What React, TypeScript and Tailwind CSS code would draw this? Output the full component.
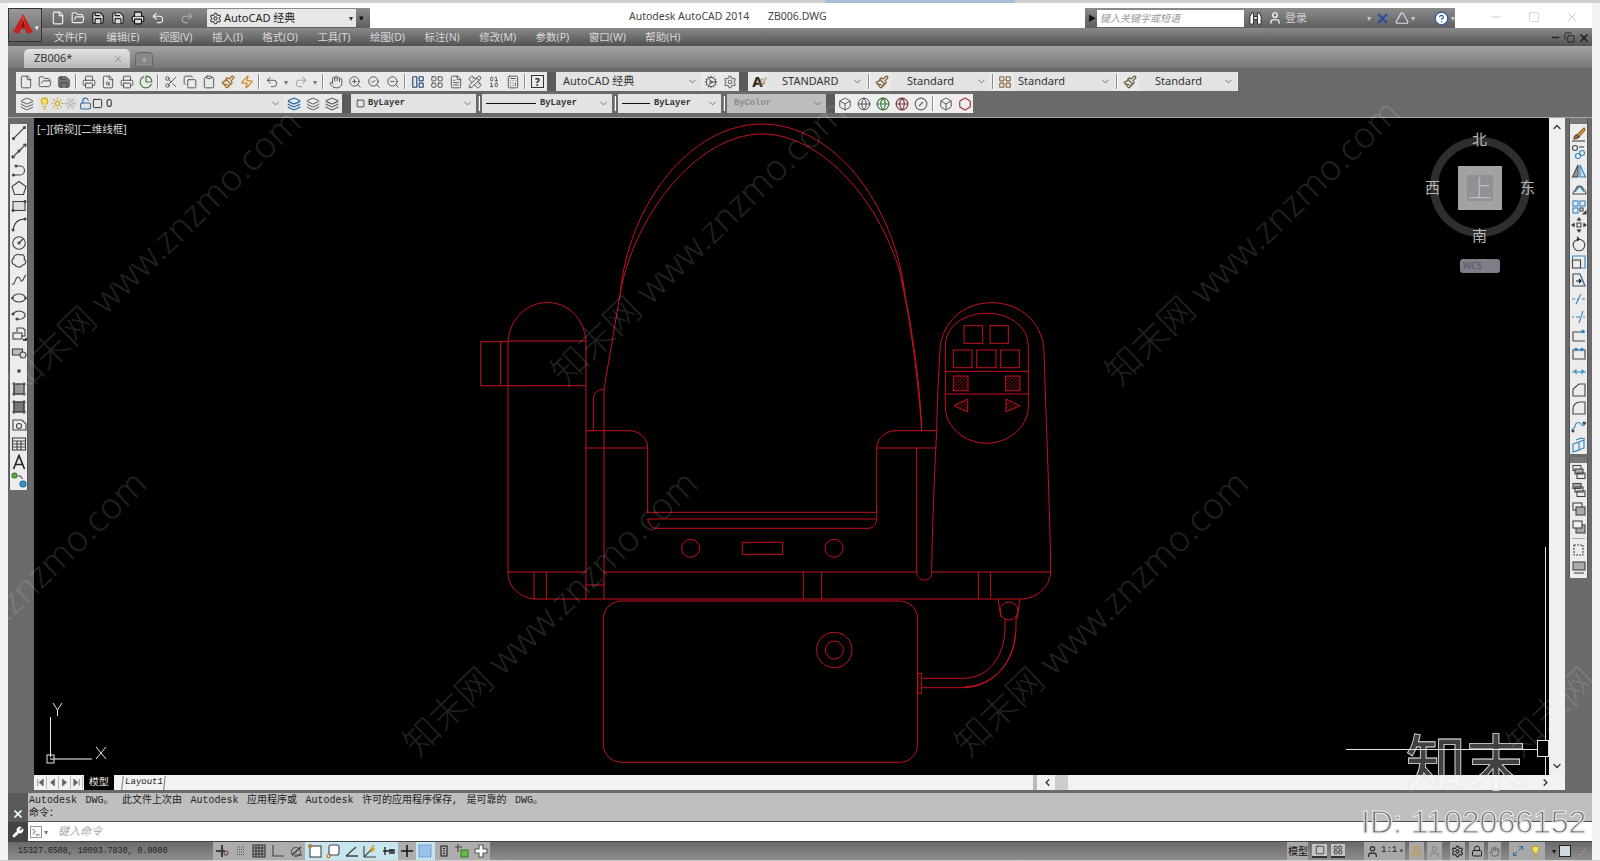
import React from "react";
import {
  File, FolderOpen, Save, Printer, FileSearch, PieChart, Scissors, Copy, Clipboard, Paintbrush, Zap, Undo2, Redo2,
  Hand, ZoomIn, ZoomOut, SearchCheck, LayoutPanelLeft, LayoutGrid, FileText, PencilRuler, Calculator, Settings,
  Layers, Lightbulb, Sun, Snowflake, LockOpen, Box, Globe, CircleSlash, ChevronDown, ChevronUp, ChevronLeft, ChevronRight,
  User, CircleHelp, Minus, X, Terminal, Wrench, Square, Binary, Triangle, Maximize2, Cog, Lock, Hexagon,
} from "lucide-react";

const RED = "#c3121f";

const T = ({ children, cls = "" }: { children: React.ReactNode; cls?: string }) => (
  <span className={`flex h-full w-[19px] shrink-0 items-center justify-center ${cls}`}>{children}</span>
);

const ic = "h-[14px] w-[14px] stroke-[1.4] text-[#3c3c3c]";

const Sep = () => <span className="mx-[2px] h-[15px] w-[2px] shrink-0 self-center border-l border-[#8a8a8a] bg-white" />;
const Handle = ({ w }: { w: string }) => <span className={`h-full shrink-0 bg-[#5a5a5a] ${w}`} />;
const Dot = ({ cls = "w-[10px]" }: { cls?: string }) => <span className={`flex shrink-0 items-center justify-center text-[8px] text-[#777] ${cls}`}>▾</span>;

const Combo = ({ w, children, mono = false, dim = false }: { w: string; children: React.ReactNode; mono?: boolean; dim?: boolean }) => (
  <span className={`flex h-full shrink-0 items-center justify-between pr-[3px] ${w} ${dim ? "bg-[#bdbdbd] text-[#8c8c8c]" : "bg-[#e3e3e3] text-[#333]"} ${mono ? "font-['Liberation_Mono',monospace] text-[8.8px] font-bold" : "text-[11px]"}`}>
    {children}
    <ChevronDown className="h-[11px] w-[11px] shrink-0 text-[#666]" />
  </span>
);

const Mini = ({ children, stroke = "#444" }: { children: React.ReactNode; stroke?: string }) => (
  <svg viewBox="0 0 16 16" fill="none" stroke={stroke} strokeWidth="1.1" className="h-[16px] w-[16px]">{children}</svg>
);

const B = "#2f86c1";
const draw: React.ReactNode[] = [
  <><path d="M2 14L14 2" /><circle cx="2.5" cy="13.5" r="1" fill="#444" /><circle cx="13.5" cy="2.5" r="1" fill="#444" /></>,
  <><path d="M1 15L15 1" /><path d="M1 15l3 -.5M1 15l.5-3M15 1l-3 .5M15 1l-.5 3" /><circle cx="8" cy="8" r="1" fill="#444" /></>,
  <><path d="M2 13h7a4.500 4.500 0 0 0 0-9H5" /><circle cx="2.500" cy="13" r="1" fill="#444" /><circle cx="5" cy="4" r="1" fill="#444" /></>,
  <path d="M8 1.500L15 6.500 12.500 14.500H3.500L1 6.500Z" />,
  <><rect x="2" y="3.500" width="12" height="9" fill="#ddd" /><circle cx="14" cy="3.500" r="1" fill="#444" /><circle cx="2" cy="12.500" r="1" fill="#444" /></>,
  <><path d="M2 14C3 7 7 3 14 3" /><circle cx="2" cy="14" r="1" fill="#444" /><circle cx="14" cy="3" r="1" fill="#444" /></>,
  <><circle cx="8" cy="8" r="6.300" /><path d="M8 8l4-4" /><circle cx="8" cy="8" r="1" fill="#444" /></>,
  <path d="M5 2c2-1.500 4 0 4 0s3-1 4 1-0 3-0 3 2.500 2 1.500 4-3 2-3 2-1 2.500-4 2-3.500-2-3.500-2-3.500-1-3-4 2-3 2-3-1-3 2.500-3z" />,
  <path d="M1 13c3 2 3-7 6-7s2 5 4 4 2-5 4-6" />,
  <><ellipse cx="8" cy="8" rx="6.500" ry="4" /><circle cx="1.500" cy="8" r=".8" fill="#444" /><circle cx="14.500" cy="8" r=".8" fill="#444" /></>,
  <><path d="M2 6c3-4 9-4 12 0 1 4-4 6-8 5" /><circle cx="2" cy="6" r="1" fill="#444" /><circle cx="6" cy="11" r="1" fill="#444" /></>,
  <><path d="M6 6V2h6l2 2v6h-4" /><rect x="2" y="7" width="9" height="6" /><path d="M12 14l3 0 0-2" stroke="#111" strokeWidth="1.500" /></>,
  <><rect x="1.500" y="5" width="10" height="6" fill="#bbb" /><circle cx="12" cy="11" r="3" fill="#ddd" /></>,
  <circle cx="8" cy="8" r="1.300" fill="#555" />,
  <><rect x="3" y="3" width="10" height="10" fill="#999" /><path d="M1 3h14M1 13h14M3 1v14M13 1v14" /></>,
  <><rect x="3" y="3" width="10" height="10" fill="#777" /><path d="M1 3h14M1 13h14M3 1v14M13 1v14" /></>,
  <><path d="M2 3h9l4 4v6H2z" /><circle cx="8" cy="9" r="2.500" /></>,
  <><rect x="1.500" y="2" width="13" height="12" /><path d="M1.500 5h13M1.500 8h13M1.500 11h13M6 5v9M10 5v9" /></>,
  <path d="M2.500 15L8 1.500 13.500 15M4.500 10.500h7" strokeWidth="1.600" stroke="#222" />,
  <><circle cx="3.500" cy="3.500" r="2.500" fill="#66a845" stroke="#3c7a2a" /><path d="M6.500 4h3l2 3" /><circle cx="12" cy="12" r="3" fill="#3f93cc" stroke="#1f6aa0" /></>,
];

const modify: React.ReactNode[] = [
  <><path d="M13 2L6 9l2 2 6-7z" fill="#e0a050" stroke="#8a5a20" /><path d="M6 9c-2 0-3 2-3 4 2 0 4-1 5-2z" fill="#c07030" /><path d="M1 15h13" /></>,
  <><circle cx="4" cy="4" r="2.500" /><circle cx="11" cy="9" r="2.500" stroke={B} /><circle cx="7" cy="12" r="2.500" stroke={B} /><path d="M8 3h5" /></>,
  <><path d="M7 2v12H1.500z" fill="#999" /><path d="M9 2v12h5.500z" fill="#cde" stroke={B} /></>,
  <><path d="M2 13c0-3 2-3 3-5 1-4 6-4 7 0 1 1 3 1 3 5z" /><path d="M4.500 11c0-2 2-2 2.500-3.500 1-2 3-2 3.500 0 .5 1 2 1.500 2 3.500" stroke={B} /></>,
  <><rect x="2" y="2" width="5" height="5" stroke={B} /><rect x="9" y="2" width="5" height="5" stroke={B} /><rect x="2" y="9" width="5" height="5" stroke={B} /><rect x="9" y="9" width="3" height="3" /><path d="M12 15l3 0 0-3z" fill="#111" /></>,
  <><rect x="6" y="6" width="4" height="4" /><path d="M8 1v3M8 12v3M1 8h3M12 8h3M8 1l-1.500 2h3zM8 15l-1.500-2h3zM1 8l2-1.500v3zM15 8l-2-1.500v3z" fill="#333" /></>,
  <><circle cx="8" cy="9" r="5.800" /><path d="M8 3l-2-2M8 3L6 5" stroke="#111" /></>,
  <><rect x="1.500" y="6" width="8" height="8" /><path d="M1.500 6V2h12.500v12h-4" stroke={B} /></>,
  <><path d="M2 2h7l5 12H2z" /><path d="M9 2l5 12" stroke={B} /><path d="M5 9h5M8 7l2 2-2 2" stroke="#111" /></>,
  <path d="M1 8h3M6 8h2M11 8h3M5 13L10 3" stroke={B} />,
  <path d="M1 8h2M5 8h4M12 2L8 14M12 8h2" stroke={B} />,
  <><path d="M2 14h12M2 14V5h9" /><circle cx="12" cy="4.500" r="1.300" fill={B} stroke={B} /></>,
  <><path d="M3 5H2v9h12V5h-1M6 5h4" /><circle cx="5" cy="4.500" r="1.300" fill={B} stroke={B} /><circle cx="11" cy="4.500" r="1.300" fill={B} stroke={B} /></>,
  <path d="M1 8h14M5 5.500v5M11 5.500v5M5 8l-2-1.500M11 8l2-1.500" stroke={B} />,
  <path d="M2 14V7l6-5h6v12z" />,
  <path d="M2 14V9c0-4 3-7 7-7h5v12z" />,
  <><path d="M1 13c0-3 3-2 3-5s4-5 6-2 4 1 5-2" stroke={B} /><circle cx="2" cy="13" r="1" fill="#333" /><circle cx="13" cy="5" r="1" fill="#333" /></>,
  <><path d="M2 7l6-2 0 8-6 2zM8 5l5-2v8l-5 2z" stroke={B} /><path d="M5 3l5-2 4 1" stroke={B} /></>,
];
const order: React.ReactNode[] = [
  <><rect x="2" y="1.500" width="8" height="5" /><rect x="4" y="5" width="8" height="5" fill="#aaa" /><rect x="6" y="9" width="8" height="5.500" /></>,
  <><rect x="2" y="1.500" width="8" height="5" fill="#aaa" /><rect x="4" y="5" width="8" height="5" /><rect x="6" y="9" width="8" height="5.500" /></>,
  <><rect x="2" y="2" width="9" height="7" /><rect x="5" y="6" width="9" height="8" fill="#aaa" /></>,
  <><rect x="5" y="6" width="9" height="8" fill="#aaa" /><rect x="2" y="2" width="9" height="7" fill="#eee" /></>,
];

const statusIcons: { a?: boolean; n: React.ReactNode }[] = [
  { n: <><path d="M8 2v12M2 8h9" stroke="#222" strokeWidth="1.600" /><circle cx="12" cy="10" r="2" fill="#d89a8a" stroke="#555" /><rect x="7" y="7" width="2" height="2" fill="#333" /></> },
  { n: <path d="M4 4h8M4 6.500h8M4 9h8M4 11.500h8" strokeDasharray="1 1" stroke="#555" /> },
  { n: <path d="M2 2h12v12H2zM2 5h12M2 8h12M2 11h12M5 2v12M8 2v12M11 2v12" stroke="#333" /> },
  { n: <path d="M3 2v11h11" stroke="#444" /> },
  { n: <><circle cx="8" cy="9" r="4.500" stroke="#555" /><path d="M4 12L13 4M7 12h7" stroke="#333" /></> },
  { a: true, n: <><rect x="3" y="3" width="11" height="11" stroke="#444" fill="#fff" /><circle cx="3" cy="3" r="1.500" stroke="#d07020" /></> },
  { a: true, n: <><rect x="4" y="2" width="10" height="10" fill="#fff" rx="2" /><circle cx="3.500" cy="13" r="1.700" stroke="#d07020" /></> },
  { a: true, n: <path d="M2 13h12M2 13L12 4" stroke="#444" strokeWidth="1.300" /> },
  { a: true, n: <><path d="M2 14V3M2 14h12M2 14L11 5" stroke="#444" /><path d="M12 2l-3 4 3 0-2 3" stroke="#e0a020" strokeWidth="1.500" /></> },
  { a: true, n: <path d="M3 8h10M5 4v8M9 7h5v3H9" stroke="#222" strokeWidth="1.300" /> },
  { n: <path d="M8 2v12M2 8h12" stroke="#111" strokeWidth="1.500" /> },
  { a: true, n: <rect x="2" y="2" width="12" height="12" fill="#9cc4ea" stroke="#4f86c0" strokeDasharray="1 0.600" /> },
  { n: <><rect x="5" y="3" width="6" height="10" stroke="#222" /><path d="M7 5.500h2M7 8h2M7 10.500h2" stroke="#222" /></> },
  { n: <><path d="M4 1v8M1 4h7" stroke="#444" /><rect x="7" y="7" width="7" height="7" fill="#66b84a" stroke="#3c7a2a" /></> },
  { n: <path d="M6 2h4v4h4v4h-4v4H6v-4H2V6h4z" fill="#fff" stroke="#555" /> },
];

const navs: React.ReactNode[] = [
  <path d="M4 3v10M12 3L6 8l6 5z" fill="#666" stroke="#666" />,
  <path d="M11 3L5 8l6 5z" fill="#666" stroke="#666" />,
  <path d="M5 3l6 5-6 5z" fill="#666" stroke="#666" />,
  <path d="M12 3v10M4 3l6 5-6 5z" fill="#666" stroke="#666" />,
];

const Tool = ({ children }: { children: React.ReactNode }) => (
  <span className="flex h-[18.28px] items-center justify-center"><Mini>{children}</Mini></span>
);

const marks: { pos: string; text: string }[] = [
  { pos: "left-[12px] top-[370px]", text: "知末网 www.znzmo.com" },
  { pos: "left-[557px] top-[360px]", text: "知末网 www.znzmo.com" },
  { pos: "left-[1111px] top-[360px]", text: "知末网 www.znzmo.com" },
  { pos: "left-[409px] top-[731px]", text: "知末网 www.znzmo.com" },
  { pos: "left-[960px] top-[731px]", text: "知末网 www.znzmo.com" },
  { pos: "left-[1512px] top-[731px]", text: "知末网 www.znzmo.com" },
  { pos: "left-[-142px] top-[731px]", text: "知末网 www.znzmo.com" },
];

const Drawing = () => (
  <svg viewBox="34 118 1515 657" className="block h-full w-full" fill="none" stroke={RED} strokeWidth="1">
    <defs>
      <pattern id="h" width="2.500" height="2.500" patternUnits="userSpaceOnUse" patternTransform="rotate(45)">
        <path d="M0 0V2.500" stroke={RED} strokeWidth="1" />
      </pattern>
    </defs>
    <path d="M620 295C628 205 690 124 762 124C834 124 895 205 905 295" />
    <path d="M620 295C632 220 695 134 762 134C830 134 893 220 905 295" />
    <path d="M620 295L604 389V599" />
    <path d="M905 295C911 325 920 380 921.700 431" />
    <path d="M901.500 280C910 320 918 375 921.700 431" />
    <path d="M508 341C510 318 528 302.500 547 302.500C568 302.500 584 318 586 341V599" />
    <path d="M508 341H586M480.700 341.700V385.700H586M480.700 341.700H508M500.700 341.700V385.700M508 341V572C508 588 520 597 534 599H1023C1040 597 1050 585 1050.700 572" />
    <path d="M508 572H586M534 572V599M546.300 572V599M586 585H604M604 572H917M932 572H1050.700" />
    <path d="M586 430.700H630C640 431 648 439 647.700 448V513M586 448H647.700M593.300 431V400C593.300 393 598 389 604 389" />
    <path d="M647.700 512.300H876.700M647.700 519H876.700M647.700 519C649 525 652 528.300 657 528.300H868C873 528.300 876 525 876.700 519" />
    <path d="M876.700 519V448C877 439 885 431 895 430.700H936.700M876.700 448H936.700" />
    <path d="M916.700 448V573C917 578 921 580 924.500 580C928 580 931.500 578 931.700 573C932 540 934 480 936.700 431C937 400 939 370 940 350C942 320 965 302.700 991.700 302.700C1020 302.700 1042 322 1044 350C1046 420 1050 510 1050.700 572" />
    <circle cx="690.700" cy="548.300" r="9" />
    <circle cx="834" cy="548.300" r="9" />
    <rect x="742.300" y="542.300" width="40.400" height="12" />
    <path d="M803.300 572V599M821.700 572V599M978.300 572V599M990.700 572V599" />
    <path d="M945.300 347C945.300 325 965 313.300 986.800 313.300C1008 313.300 1028.300 325 1028.300 347V407C1028.300 427 1008 443.300 986.800 443.300C965 443.300 945.300 427 945.300 407Z" />
    <rect x="964" y="325.700" width="18.700" height="17.600" />
    <rect x="990" y="325.700" width="18.300" height="17.600" />
    <rect x="953.300" y="350" width="18.700" height="17.700" />
    <rect x="976.700" y="350" width="19.300" height="17.700" />
    <rect x="1000.700" y="350" width="18.600" height="17.700" />
    <path d="M945.300 371.300H1028.300M945.300 394H1028.300" />
    <rect x="953.300" y="376" width="14.700" height="14.700" fill="url(#h)" />
    <rect x="1005.700" y="376" width="14.300" height="14.700" fill="url(#h)" />
    <path d="M954 405.700L967.700 399V412Z" fill="url(#h)" />
    <path d="M1020 405.700L1006 399V412Z" fill="url(#h)" />
    <rect x="603.300" y="601" width="314.400" height="161.300" rx="18" />
    <circle cx="834.300" cy="650" r="17.700" />
    <circle cx="834.300" cy="650" r="9" />
    <rect x="917.700" y="673.300" width="3.600" height="20" />
    <path d="M921 678.300H963C990 678.300 1005 655 1005 626.700V619" />
    <path d="M921 687.700H963C995 687.700 1016 660 1016 626V617" />
    <path d="M964 687C995 686 1014 660 1015 636" />
    <circle cx="1009" cy="611" r="9" />
    <path d="M998 599L1001 617M1020 599L1017 619" />
    <g stroke="#e8e8e8" strokeWidth="1">
      <path d="M50.500 717V757" />
      <path d="M50 759H92" strokeWidth="1.500" stroke="#aaa" />
      <rect x="47" y="755" width="7" height="8" fill="none" />
      <path d="M53 703L57.500 710M62 703L57.500 710V716" />
      <path d="M96 747L106 759M106 747L96 759" />
    </g>
    <g stroke="#e2e2e2">
      <path d="M1346 749.500H1537M1545.500 547V740M1545.500 757V775" />
      <rect x="1537.500" y="740.500" width="11" height="16" />
    </g>
    <circle cx="1480" cy="187" r="46" stroke="#2e2e2e" strokeWidth="8" />
  </svg>
);

export default function App() {
  return (
    <div className="relative flex h-[861px] w-[1600px] flex-col overflow-hidden bg-[#f3f3f3] font-['Noto_Sans','Noto_Sans_CJK_SC',sans-serif] text-[11px]">
      <div className="flex h-[3px] shrink-0 bg-[#cfcfcf]">
        <div className="ml-[825px] w-[190px] bg-[#a9bcd6]" />
      </div>

      <div className="mx-[8px] flex min-h-0 flex-1 flex-col">
        {/* title */}
        <div className="flex h-[25px] shrink-0 items-start bg-white pl-[34px] pt-[5px]">
          <div className="flex h-[20px] w-[328px] shrink-0 items-center bg-gradient-to-b from-[#8b8b8b] to-[#5f5f5f] pl-[6px] text-white">
            <T cls="!w-[20px]"><File className="h-[14px] w-[14px] text-[#eee]" /></T>
            <T cls="!w-[20px]"><FolderOpen className="h-[14px] w-[14px] text-[#eee]" /></T>
            <T cls="!w-[20px]"><Save className="h-[14px] w-[14px] text-[#111]" fill="#ddd" /></T>
            <T cls="!w-[20px]"><Save className="h-[14px] w-[14px] text-[#222]" fill="#ddd" /></T>
            <T cls="!w-[20px]"><Printer className="h-[14px] w-[14px] text-[#111]" fill="#ddd" /></T>
            <T cls="!w-[20px]"><Undo2 className="h-[14px] w-[14px] text-[#eee]" /></T>
            <Dot cls="w-[9px]" />
            <T cls="!w-[20px]"><Redo2 className="h-[14px] w-[14px] text-[#aaa]" /></T>
            <Dot cls="w-[9px]" />
            <div className="ml-px flex h-[18px] w-[149px] shrink-0 items-center justify-between bg-[#e7e7e7] pl-[2px] pr-[3px] text-[11px] text-[#222]">
              <span className="flex items-center gap-[2px] whitespace-nowrap"><Settings className="h-[13px] w-[13px] text-[#444]" />AutoCAD 经典</span>
              <span className="text-[8px] text-[#333]">▾</span>
            </div>
            <span className="ml-[3px] text-[9px] text-[#111]">▾</span>
          </div>
          <div className="ml-[259px] flex w-[200px] shrink-0 gap-[20px] whitespace-nowrap pt-[1px] text-[10.500px] text-[#444]">
            <span className="w-[119px] shrink-0">Autodesk AutoCAD 2014</span>
            <span>ZB006.DWG</span>
          </div>
          <div className="ml-[256px] flex h-[20px] w-[370px] shrink-0 items-center bg-gradient-to-b from-[#8b8b8b] to-[#5f5f5f]">
            <span className="ml-[3px] w-[9px] text-[8px] text-[#111]">▶</span>
            <div className="flex h-[17px] w-[149px] items-center bg-white pl-[3px] text-[10px] italic text-[#999]">键入关键字或短语</div>
            <T cls="ml-[2px]">
              <svg viewBox="0 0 16 16" className="h-[15px] w-[15px]" fill="#fff" stroke="#222" strokeWidth="1">
                <path d="M2 14V6l2-4h2v12zM10 14V2h2l2 4v8z" />
                <path d="M6 6h4v3H6z" />
              </svg>
            </T>
            <T><User className="h-[14px] w-[14px] text-white" /></T>
            <span className="ml-px whitespace-nowrap text-[11px] text-[#ccc]">登录</span>
            <span className="ml-[60px] text-[8px] text-[#ccc]">▾</span>
            <T cls="ml-[2px]"><X className="h-[15px] w-[15px] stroke-[3.500] text-[#2a4a9a]" /></T>
            <T><Triangle className="h-[14px] w-[14px] text-[#dde]" /></T>
            <span className="text-[8px] text-[#ccc]">▾</span>
            <T cls="ml-[17px]"><CircleHelp className="h-[15px] w-[15px] text-[#2a5aa0]" fill="#fff" /></T>
            <span className="text-[8px] text-[#ccc]">▾</span>
          </div>
          <div className="ml-[34px] flex flex-1 items-center gap-[25px] pt-[2px] text-[#aaa]">
            <Minus className="h-[14px] w-[14px] shrink-0 stroke-[1]" />
            <Square className="h-[12px] w-[12px] shrink-0 stroke-[1]" />
            <X className="h-[14px] w-[14px] shrink-0 stroke-[1]" />
          </div>
        </div>

        {/* menu */}
        <div className="flex h-[18px] shrink-0 items-center gap-[19.500px] bg-gradient-to-b from-[#8a8a8a] to-[#525252] pl-[46px] pt-px text-[10.500px] text-[#d8d8d8]">
          {["文件(F)", "编辑(E)", "视图(V)", "插入(I)", "格式(O)", "工具(T)", "绘图(D)", "标注(N)", "修改(M)", "参数(P)", "窗口(W)", "帮助(H)"].map((m) => (
            <span key={m}>{m}</span>
          ))}
          <span className="ml-auto mr-[2px] flex items-center gap-[3px] text-[#222]">
            <Minus className="h-[11px] w-[11px] stroke-[3]" />
            <Copy className="h-[11px] w-[11px] stroke-[2]" />
            <X className="h-[12px] w-[12px] stroke-[3.500]" />
          </span>
        </div>

        {/* tabs */}
        <div className="flex h-[22px] shrink-0 items-end bg-gradient-to-b from-[#a3a3a3] to-[#777] pl-[16px]">
          <div className="flex h-[19px] w-[106px] items-center justify-between rounded-t-[5px] bg-gradient-to-b from-[#e4e4e4] to-[#b8b8b8] pl-[10px] pr-[7px] text-[11px] text-[#333]">
            <span>ZB006*</span>
            <X className="h-[10px] w-[10px] stroke-[2.500] text-[#999]" />
          </div>
          <div className="mb-px ml-[5px] flex h-[15px] w-[18px] items-center justify-center rounded-t-[4px] border border-[#666] bg-[#888] text-[9px] text-[#ccc]">+</div>
        </div>

        {/* toolbars */}
        <div className="flex h-[49px] shrink-0 flex-col bg-[#6a6a6a] pl-[8px] pt-[4px]">
          <div className="flex h-[19px] w-[1222px] shrink-0 items-stretch bg-[#e9e9e9]">
            <T><File className={ic} /></T><T><FolderOpen className={ic} /></T><T><Save className={ic} fill="#777" /></T>
            <Sep />
            <T><Printer className={ic} /></T><T><FileSearch className={ic} /></T><T><Printer className={`${ic} text-[#2a6aa0]`} /></T><T><PieChart className="h-[14px] w-[14px] text-[#4a7a40]" /></T>
            <Sep />
            <T><Scissors className={ic} /></T><T><Copy className={ic} /></T><T><Clipboard className={ic} /></T><T><Paintbrush className="h-[14px] w-[14px] text-[#9a6a20]" /></T><T><Zap className="h-[14px] w-[14px] text-[#c88a20]" /></T>
            <Sep />
            <T><Undo2 className={ic} /></T><Dot /><T><Redo2 className="h-[14px] w-[14px] text-[#aaa]" /></T><Dot />
            <Sep />
            <T><Hand className={ic} /></T><T><ZoomIn className={ic} /></T><T><SearchCheck className={ic} /></T><T><ZoomOut className={ic} /></T>
            <Sep />
            <T><LayoutPanelLeft className="h-[14px] w-[14px] text-[#2a4a7a]" /></T><T><LayoutGrid className={ic} /></T><T><FileText className={ic} /></T><T><PencilRuler className={ic} /></T><T><Binary className={ic} /></T><T><Calculator className={ic} /></T>
            <Sep />
            <T><span className="flex h-[13px] w-[13px] items-center justify-center border border-[#333] text-[10px] font-bold leading-none text-[#222]">?</span></T>
            <Handle w="w-[9px]" />
            <Combo w="w-[145px] pl-[7px]">AutoCAD 经典</Combo>
            <T><Cog className={ic} /></T><T><Settings className="h-[14px] w-[14px] text-[#777]" /></T>
            <Handle w="w-[9px]" />
            <T cls="relative"><span className="text-[15px] font-bold leading-none text-[#222]">A</span><Paintbrush className="absolute right-0 top-[5px] h-[10px] w-[10px] text-[#9a6a20]" /></T>
            <Combo w="w-[99px] pl-[15px]">STANDARD</Combo>
            <Sep />
            <T><Paintbrush className="h-[14px] w-[14px] text-[#7a5a30]" /></T>
            <Combo w="w-[99px] pl-[16px]">Standard</Combo>
            <Sep />
            <T cls="!w-[18px]"><LayoutGrid className="h-[14px] w-[14px] text-[#8a6a40]" /></T>
            <Combo w="w-[100px] pl-[4px]">Standard</Combo>
            <Sep />
            <T><Paintbrush className="h-[14px] w-[14px] text-[#6a5a40]" /></T>
            <Combo w="w-[98px] pl-[16px]">Standard</Combo>
          </div>
          <div className="mt-[3px] flex h-[19px] shrink-0 items-stretch">
            <span className="flex w-[22px] shrink-0 items-center justify-center bg-[#e9e9e9]"><Layers className={ic} /></span>
            <span className="flex h-full w-[246px] shrink-0 items-center justify-between bg-[#e3e3e3] pr-[3px]">
              <span className="flex items-center">
                <T cls="!w-[13px]"><Lightbulb className="h-[13px] w-[13px] text-[#c9a520]" fill="#f2df70" /></T>
                <T cls="!w-[13px]"><Sun className="h-[13px] w-[13px] text-[#c9a520]" /></T>
                <T cls="!w-[13px]"><Snowflake className="h-[13px] w-[13px] text-[#bbb]" /></T>
                <T cls="!w-[16px]"><LockOpen className="h-[13px] w-[13px] text-[#2a6aa0]" /></T>
                <Square className="ml-[-1px] h-[11px] w-[11px] text-[#222]" />
                <span className="ml-[3px] text-[11px] text-[#222]">0</span>
              </span>
              <ChevronDown className="h-[11px] w-[11px] text-[#666]" />
            </span>
            <span className="flex w-[58px] shrink-0 items-center bg-[#e9e9e9]">
              <T><Layers className="h-[14px] w-[14px] text-[#2a6aa0]" /></T><T><Layers className={ic} /></T><T><Layers className="h-[14px] w-[14px] text-[#666]" /></T>
            </span>
            <Handle w="w-[9px]" />
            <Combo w="w-[125px] pl-[5px]" mono><span className="flex items-center gap-[3px]"><Square className="h-[9px] w-[9px] text-[#222]" />ByLayer</span></Combo>
            <Sep />
            <Combo w="w-[130px] pl-[4px]" mono><span className="flex items-center gap-[4px]"><span className="h-px w-[50px] bg-[#111]" />ByLayer</span></Combo>
            <Sep />
            <Combo w="w-[103px] pl-[4px]" mono><span className="flex items-center gap-[4px]"><span className="h-px w-[28px] bg-[#111]" />ByLayer</span></Combo>
            <Sep />
            <Combo w="w-[99px] pl-[7px]" mono dim>ByColor</Combo>
            <Handle w="w-[9px]" />
            <span className="flex w-[138px] shrink-0 items-center bg-[#eeeeee]">
              <T><Box className={ic} /></T><T><Globe className={ic} /></T><T><Globe className="h-[14px] w-[14px] text-[#3c7a3c]" /></T><T><Globe className="h-[14px] w-[14px] text-[#7a3c3c]" /></T><T><CircleSlash className="h-[14px] w-[14px] text-[#666]" /></T>
              <Sep />
              <T><Box className={ic} /></T><T><Hexagon className="h-[14px] w-[14px] text-[#a33]" /></T>
            </span>
          </div>
        </div>

        {/* main */}
        <div className="flex min-h-0 flex-1 border-t border-[#a8a8a8] bg-[#6a6a6a]">
          <div className="w-[26px] shrink-0 pl-px pt-[6px]">
            <div className="flex h-[366px] w-[19px] flex-col border-x border-[#555] bg-[#ececec]">
              {draw.map((d, i) => <Tool key={i}>{d}</Tool>)}
            </div>
          </div>

          <div className="flex min-w-0 flex-1 flex-col">
            <div className="flex min-h-0 flex-1">
              <div className="relative min-w-0 flex-1 bg-black">
                <Drawing />
                <span className="absolute left-[3px] top-[6px] text-[10.500px] leading-none text-[#d6d6d6]">[−][俯视][二维线框]</span>
                <div className="absolute left-[1424px] top-[48px] flex h-[44px] w-[44px] items-center justify-center bg-[#a2a2a2]">
                  <div className="flex h-[26px] w-[26px] items-center justify-center bg-[#909096] text-[24px] font-light leading-none text-[#c0c0c0]">上</div>
                </div>
                <span className="absolute left-[1438px] top-[14px] text-[15px] leading-none text-[#b8b8b8]">北</span>
                <span className="absolute left-[1438px] top-[110px] text-[15px] leading-none text-[#b8b8b8]">南</span>
                <span className="absolute left-[1391px] top-[62px] text-[15px] leading-none text-[#b8b8b8]">西</span>
                <span className="absolute left-[1486px] top-[62px] text-[15px] leading-none text-[#b8b8b8]">东</span>
                <div className="absolute left-[1426px] top-[141px] flex h-[14px] w-[40px] items-center rounded-[3px] bg-[#7e7e88] pl-[3px] text-[9px] text-[#55555f]">WCS</div>
              </div>
              <div className="flex w-[16px] shrink-0 flex-col items-center justify-between bg-[#f0f0f0] py-[3px]">
                <ChevronUp className="h-[12px] w-[12px] stroke-[3] text-[#444]" />
                <ChevronDown className="h-[12px] w-[12px] stroke-[3] text-[#444]" />
              </div>
            </div>
            <div className="flex h-[15px] shrink-0 items-center bg-[#f2f2f2] font-['Liberation_Mono',monospace] text-[9px] text-[#222]">
              <span className="flex w-[50px] shrink-0 items-center pl-[1px]">
                {navs.map((n, i) => (
                  <span key={i} className="flex h-[13px] w-[12px] items-center justify-center border-r border-[#bbb]">
                    <svg viewBox="0 0 16 16" className="h-[11px] w-[11px]">{n}</svg>
                  </span>
                ))}
              </span>
              <span className="flex h-full w-[30px] shrink-0 items-center justify-center bg-black text-[10px] text-white">模型</span>
              <span className="ml-[8px] w-[43px] shrink-0 -skew-x-6 border-x border-[#777] pl-[2px]">Layout1</span>
              <span className="ml-[868px] h-full w-[4px] shrink-0 bg-[#bbb]" />
              <ChevronLeft className="ml-[5px] h-[11px] w-[11px] shrink-0 stroke-[3] text-[#333]" />
              <span className="ml-[2px] h-full w-[13px] shrink-0 bg-[#cdcdcd]" />
              <ChevronRight className="ml-[472px] h-[11px] w-[11px] shrink-0 stroke-[3] text-[#333]" />
            </div>
            <div className="h-[3px] shrink-0 bg-[#6a6a6a]" />
          </div>

          <div className="w-[27px] shrink-0 pl-[4px]">
            <div className="flex h-[336px] w-[19px] flex-col border-x border-[#555] bg-[#ececec]">
              <div className="h-[6px] shrink-0 bg-[#777]" />
              <div className="h-px shrink-0" />
              {modify.map((d, i) => <Tool key={i}>{d}</Tool>)}
            </div>
            <div className="mt-[3px] flex h-[121px] w-[19px] flex-col border-x border-[#555] bg-[#ececec]">
              <div className="h-[6px] shrink-0 bg-[#777]" />
              {order.map((d, i) => <Tool key={i}>{d}</Tool>)}
              <div className="mx-[2px] my-[2px] h-px shrink-0 bg-[#aaa]" />
              <Tool><path d="M3 3h9v10H3z" strokeDasharray="2 1" /></Tool>
              <Tool><><rect x="2" y="2" width="12" height="8" fill="#aaa" /><path d="M3 13h10" /></></Tool>
            </div>
          </div>
        </div>

        {/* command */}
        <div className="flex h-[28px] shrink-0 bg-[#bfbfbf]">
          <div className="flex w-[20px] shrink-0 flex-col items-center justify-end bg-[#5a5a5a] pb-[1px]">
            <X className="h-[12px] w-[12px] stroke-[3.500] text-white" />
          </div>
          <div className="whitespace-pre pl-px pt-[2px] font-['Liberation_Mono','Noto_Sans_CJK_SC',monospace] text-[10px] leading-[12.500px] text-[#222] [word-spacing:2.500px]">
            <div>Autodesk DWG。 此文件上次由 Autodesk 应用程序或 Autodesk 许可的应用程序保存, 是可靠的 DWG。</div>
            <div>命令：</div>
          </div>
        </div>
        <div className="flex h-[20px] shrink-0 items-center border-t border-[#555] bg-white">
          <div className="flex h-full w-[20px] shrink-0 items-center justify-center bg-[#444]">
            <Wrench className="h-[12px] w-[12px] text-white" fill="#fff" />
          </div>
          <Terminal className="ml-[2px] h-[12px] w-[12px] border border-[#999] text-[#444]" />
          <span className="ml-[2px] text-[8px] text-[#777]">▾</span>
          <span className="ml-[10px] text-[11px] italic text-[#a8a8a8]">键入命令</span>
        </div>

        {/* status */}
        <div className="flex h-[19px] shrink-0 items-center border-t border-[#444] bg-gradient-to-b from-[#6a6a6a] to-[#8e8e8e]">
          <span className="w-[205px] shrink-0 pl-[10px] font-['Liberation_Mono',monospace] text-[8.300px] text-[#222]">15327.6508, 10093.7830, 0.0000</span>
          <span className="flex h-full w-[277px] shrink-0 items-center bg-[#adadad]">
            {statusIcons.map((s, i) => (
              <span key={i} className={`flex h-full w-[18.500px] items-center justify-center ${s.a ? "bg-[#c6e5ee]" : ""}`}>
                <Mini>{s.n}</Mini>
              </span>
            ))}
          </span>
          <span className="ml-[797px] flex h-full w-[21px] items-center whitespace-nowrap bg-[#a8a8a8] pl-[1px] text-[10px] text-[#111]">模型</span>
          <span className="ml-[4px] flex h-[14px] w-[15px] items-center justify-center border-b-2 border-[#333] bg-[#c4c4c4]"><Square className="h-[10px] w-[10px] text-[#333]" /></span>
          <span className="ml-[4px] flex h-[14px] w-[14px] items-center justify-center border-b-2 border-[#333] bg-[#c4c4c4]"><LayoutGrid className="h-[10px] w-[10px] text-[#333]" /></span>
          <span className="ml-[19px] flex h-full w-[41px] items-center gap-[2px] bg-[#a8a8a8] pl-[2px] font-['Liberation_Mono',monospace] text-[9px] text-[#222]"><User className="h-[13px] w-[13px]" />1:1<span className="text-[7px]">▾</span></span>
          <span className="ml-[4px] flex h-full w-[15px] items-center justify-center bg-[#a8a8a8]"><User className="h-[13px] w-[13px] text-[#c89a30]" /></span>
          <span className="ml-[3px] flex h-full w-[15px] items-center justify-center bg-[#a8a8a8]"><User className="h-[13px] w-[13px] text-[#888]" /></span>
          <span className="ml-[8px] flex h-full w-[15px] items-center justify-center bg-[#a8a8a8]"><Settings className="h-[13px] w-[13px] text-[#222]" /></span>
          <span className="ml-[4px] flex h-full w-[15px] items-center justify-center bg-[#a8a8a8]"><Lock className="h-[12px] w-[12px] text-[#222]" /></span>
          <span className="ml-[4px] flex h-full w-[13px] items-center justify-center bg-[#a8a8a8]"><Hand className="h-[11px] w-[11px] text-[#666]" /></span>
          <span className="ml-[8px] flex h-full w-[36px] items-center justify-around bg-[#a8a8a8]"><Maximize2 className="h-[12px] w-[12px] text-[#2a6aa0]" /><Lightbulb className="h-[13px] w-[13px] text-[#c9a520]" fill="#f2df70" /></span>
          <span className="ml-[7px] text-[8px] text-[#111]">▾</span>
          <span className="ml-[3px] h-[12px] w-[12px] border border-[#222] bg-[#d0d8e0]" />
          <span className="ml-[8px] text-[7px] leading-none text-[#ddd]">⋰</span>
        </div>
      </div>
      <div className="h-px shrink-0 bg-[#cfcfcf]" />

      {/* A button */}
      <div className="absolute left-[8px] top-[8px] flex h-[34px] w-[34px] items-center justify-center border border-[#333] bg-gradient-to-b from-[#999] to-[#666]">
        <svg viewBox="0 0 24 24" className="mr-[5px] h-[24px] w-[24px]">
          <path d="M12 1L2 19l6 2 2-5h4l2 5 6-2z" fill="#c5221f" />
          <path d="M12 1l-2.500 13h5z" fill="#e04a30" />
          <path d="M12 6l-2 8h4z" fill="#7a1010" />
        </svg>
        <span className="absolute right-[2px] top-[14px] text-[7px] text-white">▾</span>
      </div>

      {/* watermarks */}
      {marks.map((m, i) => (
        <span key={i} className={`pointer-events-none absolute origin-left -rotate-[44deg] whitespace-nowrap text-[36px] font-light leading-none text-white/15 ${m.pos}`}>
          {m.text}
        </span>
      ))}
      <span className="pointer-events-none absolute left-[1406px] top-[729px] font-['Noto_Sans_CJK_SC',sans-serif] text-[60px] font-medium leading-none text-white/25 [-webkit-text-stroke:0.800px_#e8e8e8]">知末</span>
      <span className="pointer-events-none absolute left-[1361px] top-[806px] font-['Liberation_Sans',sans-serif] text-[32px] leading-none text-white/15 [-webkit-text-stroke:1px_#f4f4f4] [text-shadow:0_0_1px_#555]">ID: 1102066152</span>
    </div>
  );
}
